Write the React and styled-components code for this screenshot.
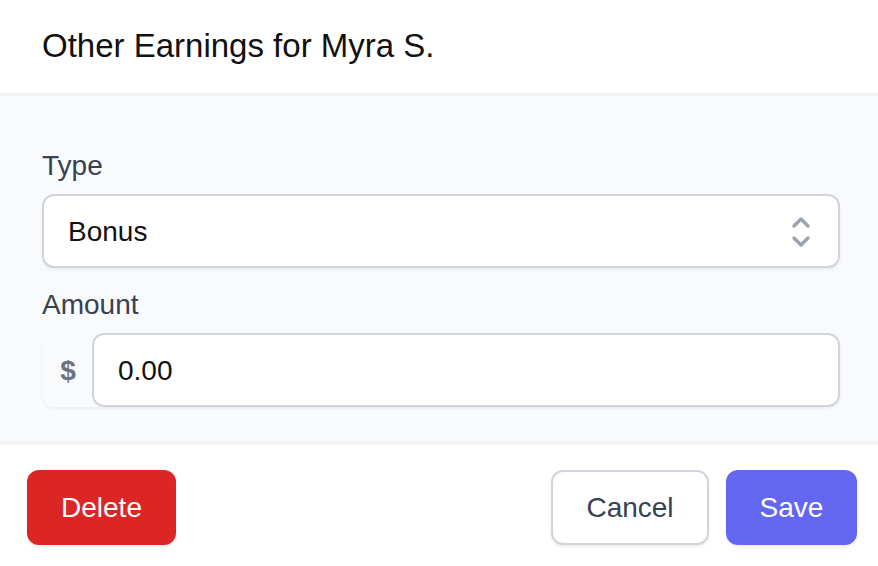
import React from "react";
import styled, { createGlobalStyle } from "styled-components";

const GlobalStyle = createGlobalStyle`
  html, body {
    margin: 0;
    padding: 0;
    background: #ffffff;
  }
  body {
    font-family: "Liberation Sans", Arial, sans-serif;
    -webkit-font-smoothing: antialiased;
  }
  * {
    box-sizing: border-box;
  }
`;

const Modal = styled.div`
  width: 878px;
  height: 566px;
  display: flex;
  flex-direction: column;
  background: #ffffff;
`;

const Header = styled.header`
  height: 96px;
  flex: none;
  display: flex;
  align-items: center;
  padding: 0 42px 1px;
  border-bottom: 3px solid #f1f2f4;
`;

const Title = styled.h2`
  margin: 0;
  font-size: 33px;
  font-weight: 400;
  line-height: 48px;
  color: #111111;
`;

const Body = styled.div`
  flex: none;
  height: 349px;
  background: #f9fafb;
  padding: 50px 38px 0 42px;
  border-bottom: 4px solid #f1f2f4;
`;

const Field = styled.div`
  display: flex;
  flex-direction: column;
  margin-top: ${(p) => p.$gap || 0}px;
`;

const Label = styled.label`
  font-size: 28px;
  line-height: 40px;
  color: #374151;
  margin-bottom: 8px;
`;

const SelectBox = styled.div`
  height: 74px;
  display: flex;
  align-items: center;
  justify-content: space-between;
  padding: 2px 26px 0 24px;
  background: #ffffff;
  border: 2px solid #d1d5db;
  border-radius: 12px;
  box-shadow: 0 2px 3px rgba(0, 0, 0, 0.06);
  font-size: 28px;
  color: #111111;
`;

const InputGroup = styled.div`
  display: flex;
  height: 74px;
  border-radius: 12px;
  box-shadow: 0 2px 3px rgba(0, 0, 0, 0.05);
`;

const Addon = styled.span`
  width: 50px;
  flex: none;
  display: flex;
  align-items: center;
  justify-content: center;
  padding: 2px 0 0 2px;
  font-size: 28px;
  font-weight: 700;
  color: #6b7280;
  background: #f9fafb;
  border-radius: 12px 0 0 12px;
`;

const AmountInput = styled.div`
  flex: 1;
  display: flex;
  align-items: center;
  padding: 2px 0 0 24px;
  background: #ffffff;
  border: 2px solid #d1d5db;
  border-radius: 12px;
  font-size: 28px;
  color: #111111;
`;

const Footer = styled.footer`
  flex: 1;
  display: flex;
  align-items: flex-start;
  justify-content: space-between;
  padding: 25px 21px 0 27px;
`;

const Actions = styled.div`
  display: flex;
  gap: 17px;
`;

const Button = styled.button`
  height: 75px;
  width: ${(p) => p.$width}px;
  border-radius: 12px;
  font-family: inherit;
  font-size: 28px;
  cursor: pointer;
  border: ${(p) => (p.$variant === "outline" ? "2px solid #d1d5db" : "none")};
  color: ${(p) => (p.$variant === "outline" ? "#374151" : "#ffffff")};
  background: ${(p) =>
    p.$variant === "danger"
      ? "#dc2626"
      : p.$variant === "primary"
      ? "#6366f1"
      : "#ffffff"};
  box-shadow: 0 2px 3px rgba(0, 0, 0, 0.07);
`;

const ChevronUpDown = () => (
  <svg width="22" height="34" viewBox="0 0 22 34" fill="none">
    <path
      d="M4 11 L11 4 L18 11"
      stroke="#9ca3af"
      strokeWidth="3.4"
      strokeLinecap="round"
      strokeLinejoin="round"
    />
    <path
      d="M4 23 L11 30 L18 23"
      stroke="#9ca3af"
      strokeWidth="3.4"
      strokeLinecap="round"
      strokeLinejoin="round"
    />
  </svg>
);

const App = () => {
  return (
    <>
      <GlobalStyle />
      <Modal>
        <Header>
          <Title>Other Earnings for Myra S.</Title>
        </Header>
        <Body>
          <Field>
            <Label>Type</Label>
            <SelectBox>
              <span>Bonus</span>
              <ChevronUpDown />
            </SelectBox>
          </Field>
          <Field $gap={17}>
            <Label>Amount</Label>
            <InputGroup>
              <Addon>$</Addon>
              <AmountInput>0.00</AmountInput>
            </InputGroup>
          </Field>
        </Body>
        <Footer>
          <Button $variant="danger" $width={149}>Delete</Button>
          <Actions>
            <Button $variant="outline" $width={158}>Cancel</Button>
            <Button $variant="primary" $width={131}>Save</Button>
          </Actions>
        </Footer>
      </Modal>
    </>
  );
};

export default App;
